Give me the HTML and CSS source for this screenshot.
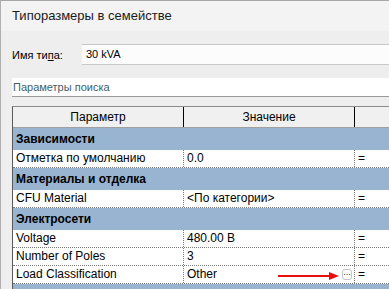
FILE: index.html
```html
<!DOCTYPE html>
<html lang="ru">
<head>
  <meta charset="UTF-8">
  <title>Типоразмеры в семействе</title>
  <link rel="stylesheet" href="styles.css">
</head>
<body>
  <div class="window">
    <div class="titlebar">Типоразмеры в семействе</div>

    <div class="content">
      <div class="type-row">
        <label class="type-label">Имя ти<u>п</u>а:</label>
        <div class="type-input">30 kVA</div>
      </div>

      <div class="search">Параметры поиска</div>

      <div class="grid">
        <div class="head">
          <div class="cell">Параметр</div>
          <div class="cell">Значение</div>
          <div class="cell"></div>
        </div>

        <div class="group">Зависимости</div>
        <div class="row">
          <div class="cell">Отметка по умолчанию</div>
          <div class="cell">0.0</div>
          <div class="cell">=</div>
        </div>

        <div class="group">Материалы и отделка</div>
        <div class="row">
          <div class="cell">CFU Material</div>
          <div class="cell">&lt;По категории&gt;</div>
          <div class="cell">=</div>
        </div>

        <div class="group">Электросети</div>
        <div class="row">
          <div class="cell">Voltage</div>
          <div class="cell">480.00 В</div>
          <div class="cell">=</div>
        </div>
        <div class="row">
          <div class="cell">Number of Poles</div>
          <div class="cell">3</div>
          <div class="cell">=</div>
        </div>
        <div class="row">
          <div class="cell">Load Classification</div>
          <div class="cell value-btn">Other <span class="dots">...</span></div>
          <div class="cell">=</div>
        </div>

        <div class="group"></div>
      </div>
    </div>

    <!-- стрелка-указатель поверх таблицы -->
    <svg class="arrow" width="64" height="10" viewBox="0 0 64 10">
      <line x1="0" y1="5" x2="54" y2="5" stroke="#e8100f" stroke-width="2"/>
      <polygon points="51,1 61,5 51,9" fill="#e8100f"/>
    </svg>
  </div>
</body>
</html>
```

FILE: styles.css
```css
body {
  margin: 0;
  overflow: hidden;
  font-family: 'Liberation Sans', Arial, sans-serif;
  color: #000;
  background-color: #eeeeee;
}

.window {
  position: relative;
  height: 288px;
  overflow: hidden;
  border-top: 1px solid #a8a8a8;
  border-left: 1px solid #b0b0b0;
  background-color: #eeeeee;
}

.titlebar {
  height: 30px;
  line-height: 30px;
  padding-left: 11px;
  font-size: 13px;
  color: #1b1b1b;
  background-color: #f3f3f3;
}

.content {
  padding: 13px 0 0 11px;
}

.type-row {
  display: flex;
  align-items: center;
}

.type-label {
  width: 70px;
  font-size: 11px;
}

.type-input {
  flex: 1;
  height: 19px;
  line-height: 19px;
  padding-left: 4px;
  font-size: 11px;
  background-color: #fcfcfc;
  border-top: 1px solid #c8c8c8;
  border-bottom: 1px solid #c8c8c8;
}

.search {
  margin-top: 13px;
  height: 18px;
  line-height: 18px;
  padding-left: 1px;
  font-size: 11px;
  color: #3f5e68;
  background-color: #fff;
  border-bottom: 1px solid #9a9a9a;
}

.grid {
  margin-top: 9px;
  width: 420px;
  border-top: 1px solid #8c8c8c;
  border-left: 1px solid #5a5a5a;
  font-size: 12px;
}

.head, .row {
  display: grid;
  grid-template-columns: 171px 171px 1fr;
}

.head {
  height: 21px;
  background-color: #f0f0f0;
  border-bottom: 1px solid #a0a0a0;
  box-sizing: border-box;
}

.head .cell {
  text-align: center;
  line-height: 20px;
  border-right: 1px solid #000;
}

.group {
  height: 22px;
  line-height: 22px;
  padding-left: 3px;
  font-weight: bold;
  background-color: #99b4d1;
}

.row {
  height: 18px;
  background-color: #fff;
  border-bottom: 1px dotted #7a7a7a;
  box-sizing: border-box;
}

.row .cell {
  line-height: 17px;
  padding-left: 3px;
  border-right: 1px dotted #7a7a7a;
  white-space: nowrap;
}

.value-btn {
  display: flex;
  justify-content: space-between;
  align-items: center;
}

.dots {
  width: 8px;
  height: 9px;
  margin-right: 2px;
  font-size: 9px;
  line-height: 5px;
  text-align: center;
  color: #333;
  border: 1px solid #c4c4c4;
  border-radius: 3px;
}

.arrow {
  position: absolute;
  left: 277px;
  top: 270px;
}
```
